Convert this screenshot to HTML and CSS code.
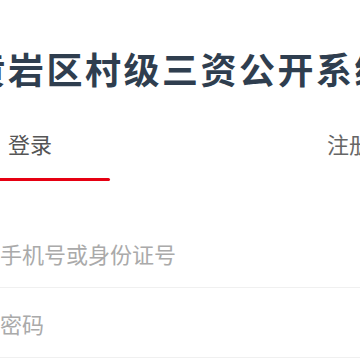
FILE: index.html
```html
<!DOCTYPE html>
<html lang="zh-CN">
  <head>
    <meta charset="UTF-8" />
    <meta name="viewport" content="width=device-width, initial-scale=1.0" />
    <title>黄岩区村级三资公开系统</title>
    <link rel="stylesheet" href="styles.css">
  </head>
  <body>
    <div class="page">
      <h1 class="title">黄岩区村级三资公开系统</h1>
      <div class="tabs">
        <div class="tab active">登录</div>
        <div class="tab">注册</div>
      </div>
      <form class="login-form">
        <div class="field">
          <input type="text" placeholder="手机号或身份证号" />
        </div>
        <div class="field">
          <input type="password" placeholder="密码" />
        </div>
      </form>
    </div>
  </body>
</html>
```

FILE: styles.css
```css
body {
  margin: 0;
  background-color: #fff;
  font-family: "Noto Sans CJK SC", "Noto Sans", sans-serif;
}

.page {
  width: 360px;
  overflow: hidden;
}

.title {
  margin: 0 -80px;
  padding-top: 48px;
  font-size: 36px;
  line-height: 40px;
  font-weight: bold;
  letter-spacing: 2.5px;
  text-indent: 2.5px;
  text-align: center;
  color: #2f3e4f;
  white-space: nowrap;
}

.tabs {
  display: flex;
  gap: 209px;
  margin-top: 40px;
}

.tab {
  position: relative;
  flex: 0 0 auto;
  padding: 0 0 23px 8px;
  font-size: 22px;
  line-height: 30px;
  color: #666;
  white-space: nowrap;
}

.tab.active {
  width: 102px;
  color: #555;
}

.tab.active::after {
  content: "";
  position: absolute;
  left: -4px;
  right: 0;
  bottom: 0;
  height: 3px;
  border-radius: 2px;
  background-color: #e60012;
}

.login-form {
  margin-top: 37px;
}

.field {
  padding: 20px 0 19px;
  border-bottom: 1px solid #f0f0f0;
}

.field input {
  display: block;
  width: 100%;
  height: 30px;
  padding: 0;
  border: none;
  outline: none;
  font-family: inherit;
  font-size: 22px;
  line-height: 30px;
  color: #333;
  background: transparent;
}

.field input::placeholder {
  color: #aaa;
}
```
